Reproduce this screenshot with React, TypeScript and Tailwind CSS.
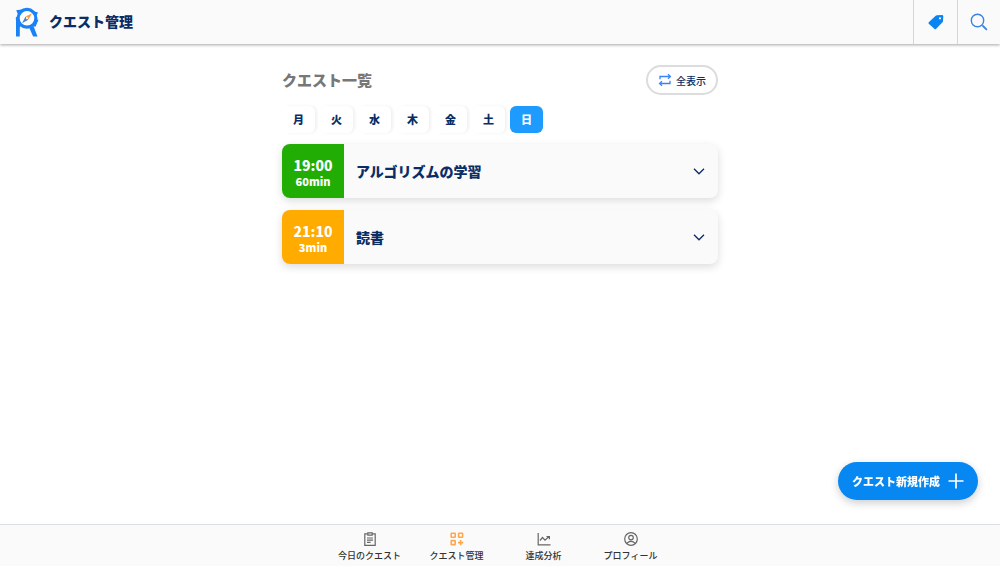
import { useState } from "react";
import type { ReactNode } from "react";

type Quest = {
  start: string;
  minutes: number;
  title: string;
  color: string;
};

const days = ["月", "火", "水", "木", "金", "土", "日"];

const quests: Quest[] = [
  { start: "19:00", minutes: 60, title: "アルゴリズムの学習", color: "bg-[#22ad05]" },
  { start: "21:10", minutes: 3, title: "読書", color: "bg-[#ffab00]" },
];

function Logo() {
  return (
    <svg viewBox="0 0 24 30" className="h-[30px] w-6" fill="none" aria-hidden="true">
      <path d="M1 29.500V12.500h3.200l1.600 6.300-1 1.700v9z" fill="#1a82f7" />
      <path d="M14.300 20.800l4.300-1.600 3.900 10.300h-4.400z" fill="#1a82f7" />
      <path d="M1.200 3.200 8 2.200 3.500 8.500z" fill="#1a82f7" />
      <path d="m19.500 4.500 3.500 1-1.800 3.500zM21.500 12.500l2 .3-3 7-3-.8z" fill="#1a82f7" />
      <path d="M.8 10.500 3 8.500l1 5H1z" fill="#1a82f7" />
      <circle cx="12" cy="11.300" r="8.900" fill="#fff" stroke="#1a82f7" strokeWidth="3.200" />
      <path d="M17 6.300l-3.400 6.300-3-3z" fill="#f5a04a" />
      <path d="M7 16.300l3.400-6.500 3 3z" fill="#4686cf" />
      <circle cx="12" cy="11.300" r="1" fill="#fff" />
    </svg>
  );
}

function TagIcon() {
  return (
    <svg viewBox="0 0 16 16" className="size-4" aria-hidden="true">
      <path
        fill="#0b84f3"
        fillRule="evenodd"
        d="M8.900 1.300 14 1a1.300 1.300 0 0 1 1.300 1.300L15 7.200a1.600 1.600 0 0 1-.5 1.100L8.200 14.800a1.300 1.300 0 0 1-1.900 0L1 10a1.300 1.300 0 0 1 0-1.900l6.700-6.300a1.800 1.800 0 0 1 1.200-.5zM12 3.200a1.100 1.100 0 1 0 0 2.200 1.100 1.100 0 0 0 0-2.200z"
      />
    </svg>
  );
}

function SearchIcon() {
  return (
    <svg viewBox="0 0 18 18" className="size-[18px]" fill="none" stroke="#3b82e6" aria-hidden="true">
      <circle cx="7.500" cy="7.500" r="6.200" strokeWidth="1.400" />
      <path d="m13 13 3.400 3.400" strokeWidth="1.800" strokeLinecap="round" />
    </svg>
  );
}

function RepeatIcon() {
  return (
    <svg viewBox="0 0 14 14" className="size-3.5" fill="none" stroke="#3b82f6" strokeWidth="1.300" aria-hidden="true">
      <path d="M2 6.300V3.500h9.500M12 7.700v2.800H2.500" />
      <path d="m10 1.300 2.400 2.200L10 5.700M4 8.300l-2.400 2.200L4 12.700" />
    </svg>
  );
}

function ChevronIcon() {
  return (
    <svg viewBox="0 0 12 12" className="size-3" fill="none" stroke="#12306b" strokeWidth="1.400" aria-hidden="true">
      <path d="m1 3.800 5 5 5-5" />
    </svg>
  );
}

function PlusIcon() {
  return (
    <svg viewBox="0 0 16 16" className="size-4" stroke="#fff" strokeWidth="1.700" aria-hidden="true">
      <path d="M8 .5v15M.5 8h15" />
    </svg>
  );
}

function NavIcon({ children, className }: { children: ReactNode; className: string }) {
  return (
    <svg
      viewBox="0 0 14 14"
      className={`size-3.5 ${className}`}
      fill="none"
      stroke="currentColor"
      strokeWidth="1.200"
      aria-hidden="true"
    >
      {children}
    </svg>
  );
}

const navItems = [
  {
    label: "今日のクエスト",
    active: false,
    icon: (
      <>
        <path d="M4.500 1.800H1.800v11.500h10.400V1.800H9.500" />
        <path d="M4.800.8h4.400v2.400H4.800zM4 6h6M4 8.200h6M4 10.400h3.600" />
      </>
    ),
  },
  {
    label: "クエスト管理",
    active: true,
    icon: (
      <g strokeWidth="1.600">
        <rect x="1.200" y="1.200" width="4" height="4" rx=".4" />
        <rect x="8.600" y="1.200" width="4" height="4" rx=".4" />
        <rect x="1.200" y="8.600" width="4" height="4" rx=".4" />
        <path d="M10.600 8v5.200M8 10.600h5.200" />
      </g>
    ),
  },
  {
    label: "達成分析",
    active: false,
    icon: (
      <>
        <path d="M1.200 1v11.800H13.500" />
        <path d="m3 8.500 2.500-3 2.500 2.700 4-3.700M9.500 4.500h2.900v2.800" />
      </>
    ),
  },
  {
    label: "プロフィール",
    active: false,
    icon: (
      <>
        <circle cx="7" cy="7" r="6.300" />
        <circle cx="7" cy="5.600" r="2.300" />
        <path d="M3 11.600c.7-1.600 2.200-2.300 4-2.300s3.300.7 4 2.300" />
      </>
    ),
  },
];

function QuestCard({ quest }: { quest: Quest }) {
  return (
    <li className="flex h-[54px] overflow-hidden rounded-lg bg-[#fafafa] shadow-[0_3px_8px_rgba(0,0,0,0.14)]">
      <div
        className={`flex w-[62px] shrink-0 flex-col items-center justify-center pt-1 font-black text-white ${quest.color}`}
      >
        <span className="text-sm leading-4">{quest.start}</span>
        <span className="text-[11px] leading-4">{quest.minutes}min</span>
      </div>
      <button type="button" className="flex flex-1 items-center justify-between pr-[13px] pl-3 text-left">
        <span className="text-sm font-black">{quest.title}</span>
        <ChevronIcon />
      </button>
    </li>
  );
}

export default function App() {
  const [selectedDay, setSelectedDay] = useState("日");

  return (
    <div className="flex h-screen flex-col bg-white font-['Noto_Sans_CJK_JP',sans-serif] text-[#0b2d66]">
      <header className="flex h-11 shrink-0 items-center bg-[#fafafa] shadow-[0_1px_3px_rgba(0,0,0,0.35)]">
        <div className="flex flex-1 items-center gap-2.5 pl-[15px]">
          <Logo />
          <h1 className="pb-0.5 text-sm font-black">クエスト管理</h1>
        </div>
        <button
          type="button"
          aria-label="タグ"
          className="flex w-11 items-center justify-center self-stretch border-l border-[#d6d6d6]"
        >
          <TagIcon />
        </button>
        <button
          type="button"
          aria-label="検索"
          className="flex w-[43px] items-center justify-center self-stretch border-l border-[#d6d6d6]"
        >
          <SearchIcon />
        </button>
      </header>

      <main className="mx-auto w-full max-w-[436px] flex-1 pt-[21px]">
        <div className="flex items-center justify-between">
          <h2 className="text-[15px] font-black text-[#777777]">クエスト一覧</h2>
          <button
            type="button"
            className="flex h-[30px] w-[72px] items-center justify-center gap-1 rounded-full border-2 border-[#dcdcdc] text-[10px] font-medium"
          >
            <RepeatIcon />
            全表示
          </button>
        </div>

        <div className="mt-[11px] flex gap-[5px]">
          {days.map(day => (
            <button
              key={day}
              type="button"
              aria-pressed={day === selectedDay}
              onClick={() => setSelectedDay(day)}
              className={`h-[27px] w-[33px] rounded-md text-[11px] font-black ${
                day === selectedDay
                  ? "bg-[#1e9bff] text-white"
                  : "bg-white shadow-[2px_0_3px_rgba(0,0,0,0.06)]"
              }`}
            >
              {day}
            </button>
          ))}
        </div>

        <ul className="mt-[11px] flex flex-col gap-3">
          {quests.map(quest => (
            <QuestCard key={quest.title} quest={quest} />
          ))}
        </ul>
      </main>

      <button
        type="button"
        className="fixed right-[22px] bottom-[66px] flex h-[38px] w-[140px] items-center justify-center gap-2 rounded-full bg-[#0787f2] text-[11px] font-black text-white shadow-[0_3px_8px_rgba(0,0,0,0.2)]"
      >
        クエスト新規作成
        <PlusIcon />
      </button>

      <nav className="shrink-0 border-t border-[#dcdee6] bg-[#fafafa]">
        <ul className="mx-auto grid h-[41px] max-w-[348px] grid-cols-4">
          {navItems.map(item => (
            <li key={item.label}>
              <a
                href="#"
                aria-current={item.active ? "page" : undefined}
                className="flex flex-col items-center gap-1 pt-[7px] text-[9px] leading-3 font-medium whitespace-nowrap text-[#333333]"
              >
                <NavIcon className={item.active ? "text-[#ffa94d]" : "text-[#666666]"}>{item.icon}</NavIcon>
                {item.label}
              </a>
            </li>
          ))}
        </ul>
      </nav>
    </div>
  );
}
